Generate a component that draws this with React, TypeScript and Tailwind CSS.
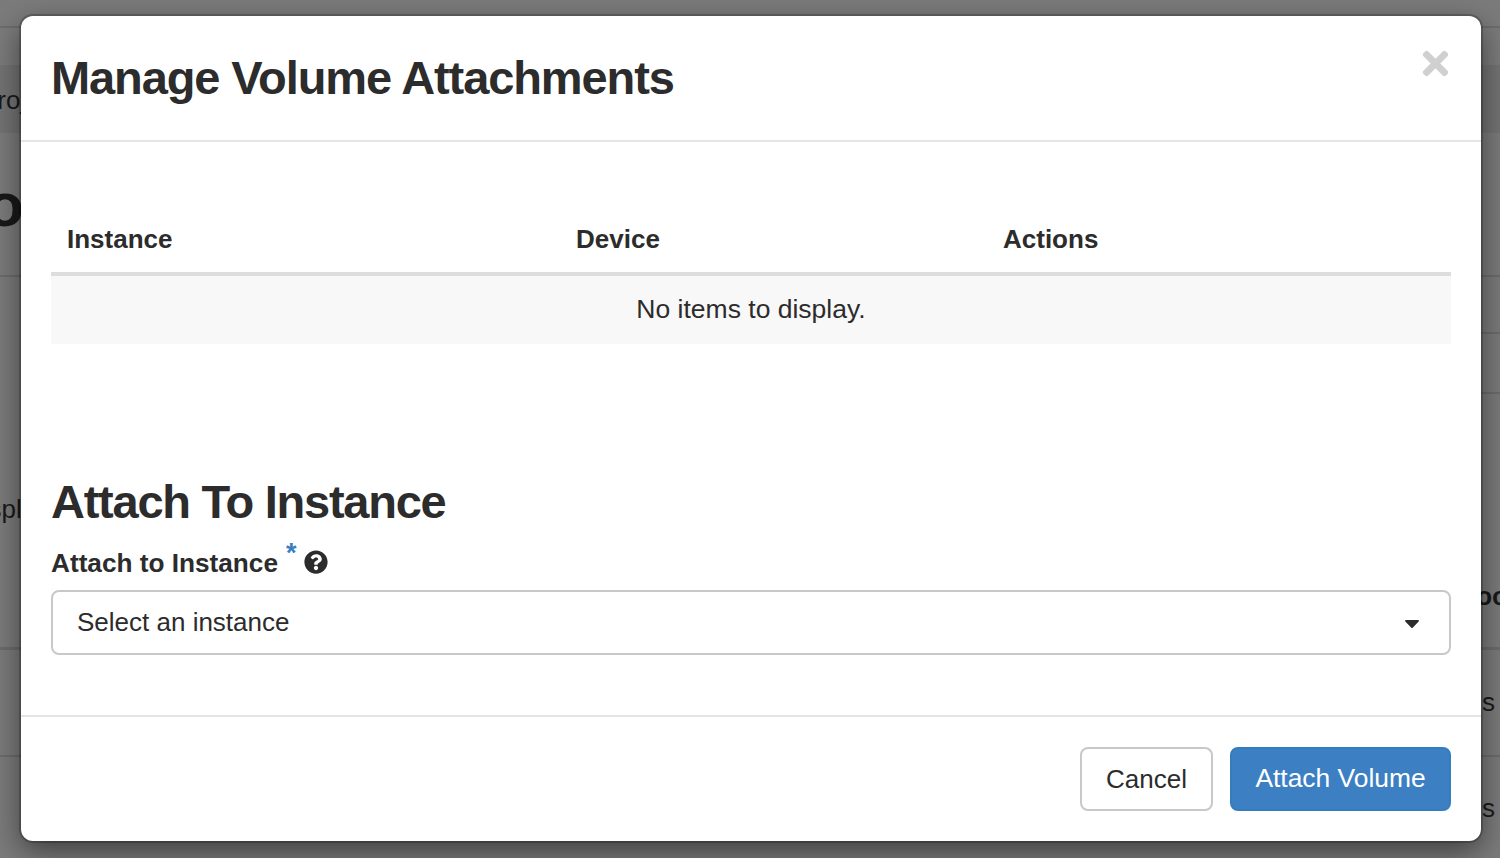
import React from "react";
import { FaTimes, FaQuestionCircle, FaCaretDown } from "react-icons/fa";

const Backdrop = () => {
  return (
    <div className="h-[858px] overflow-hidden bg-[#7b7b7b] text-[#191919] flex flex-col text-[26px]">
      <div className="h-[28px] border-b-2 border-[#6c6c6c]" />
      <div className="h-[37px]" />
      <div className="h-[68px] bg-[#737373] flex items-center pt-[2px]">
        <span className="-ml-[20px]">Proj</span>
      </div>
      <div className="h-[144px] border-b-2 border-[#6c6c6c] flex items-center pt-[1px]">
        <span className="-ml-[14px] text-[62px] font-bold">o</span>
      </div>
      <div className="h-[373px] border-b-[3px] border-[#6c6c6c] flex justify-between">
        <span className="-ml-[36px] mt-[213px]">Displ</span>
        <div className="flex flex-col items-end">
          <div className="mt-[55px] h-[62px] w-[38px] border-2 border-[#6c6c6c] rounded-l-[8px] -mr-[10px]" />
          <span className="font-bold mt-[183px] -mr-[8px]">Boo</span>
        </div>
      </div>
      <div className="h-[107px] border-b-2 border-[#6c6c6c] flex items-center justify-end">
        <span className="mr-[5px]">s</span>
      </div>
      <div className="flex-1 flex justify-end pt-[32px]">
        <span className="mr-[5px]">s</span>
      </div>
    </div>
  );
};

const App = () => {
  return (
    <div className="relative font-['Liberation_Sans',Arial,sans-serif] text-[#2c2c2c]">
      <Backdrop />

      {/* Modal */}
      <div className="absolute left-[21px] top-[16px] w-[1460px] h-[825px] bg-white rounded-[12px] shadow-[0_0_0_2px_rgba(0,0,0,0.2),0_10px_30px_rgba(0,0,0,0.5)] flex flex-col">
        <div className="h-[126px] border-b-2 border-[#e5e5e5] px-[30px] flex items-center justify-between">
          <h4 className="text-[47px] font-bold leading-none -mt-[2px] tracking-[-1.1px]">
            Manage Volume Attachments
          </h4>
          <button className="text-[#d0d0d0] -mt-[30px] -mr-[3px]">
            <FaTimes className="w-[37px] h-[37px]" />
          </button>
        </div>

        <div className="flex-1 px-[30px] flex flex-col">
          <table className="w-full mt-[66px] text-[26px] table-fixed">
            <thead>
              <tr className="border-b-[4px] border-[#dddddd] h-[66px]">
                <th className="w-[509px] text-left font-bold px-[16px] pb-[2px]">Instance</th>
                <th className="w-[427px] text-left font-bold px-[16px] pb-[2px]">Device</th>
                <th className="text-left font-bold px-[16px] pb-[2px]">Actions</th>
              </tr>
            </thead>
            <tbody>
              <tr className="bg-[#f8f8f8] h-[70px]">
                <td colSpan={3} className="text-center text-[26.5px]">
                  No items to display.
                </td>
              </tr>
            </tbody>
          </table>

          <h3 className="text-[47px] font-bold leading-none mt-[134px] tracking-[-1.25px]">
            Attach To Instance
          </h3>

          <div className="mt-[18px] flex items-start h-[47px]">
            <label className="text-[26.2px] font-bold leading-none mt-[7px]">Attach to Instance</label>
            <span className="text-[#3a7ec2] text-[27px] font-bold leading-none ml-[8px] -mt-[3px]">*</span>
            <FaQuestionCircle className="w-[24px] h-[24px] ml-[7px] mt-[7px]" />
          </div>

          <div className="h-[65px] border-2 border-[#c8c8c8] rounded-[8px] flex items-center justify-between pl-[24px] pr-[25px] text-[26px]">
            <span>Select an instance</span>
            <FaCaretDown className="w-[24px] h-[24px]" />
          </div>
        </div>

        <div className="h-[126px] border-t-2 border-[#e5e5e5] px-[30px] flex items-center justify-end gap-[17px] text-[26px]">
          <button className="h-[64px] w-[133px] border-2 border-[#c8c8c8] rounded-[8px] bg-white">
            Cancel
          </button>
          <button className="h-[64px] w-[221px] border-2 border-[#357ebd] rounded-[8px] bg-[#3c7fc3] text-white text-[26.4px]">
            Attach Volume
          </button>
        </div>
      </div>
    </div>
  );
};

export default App;
